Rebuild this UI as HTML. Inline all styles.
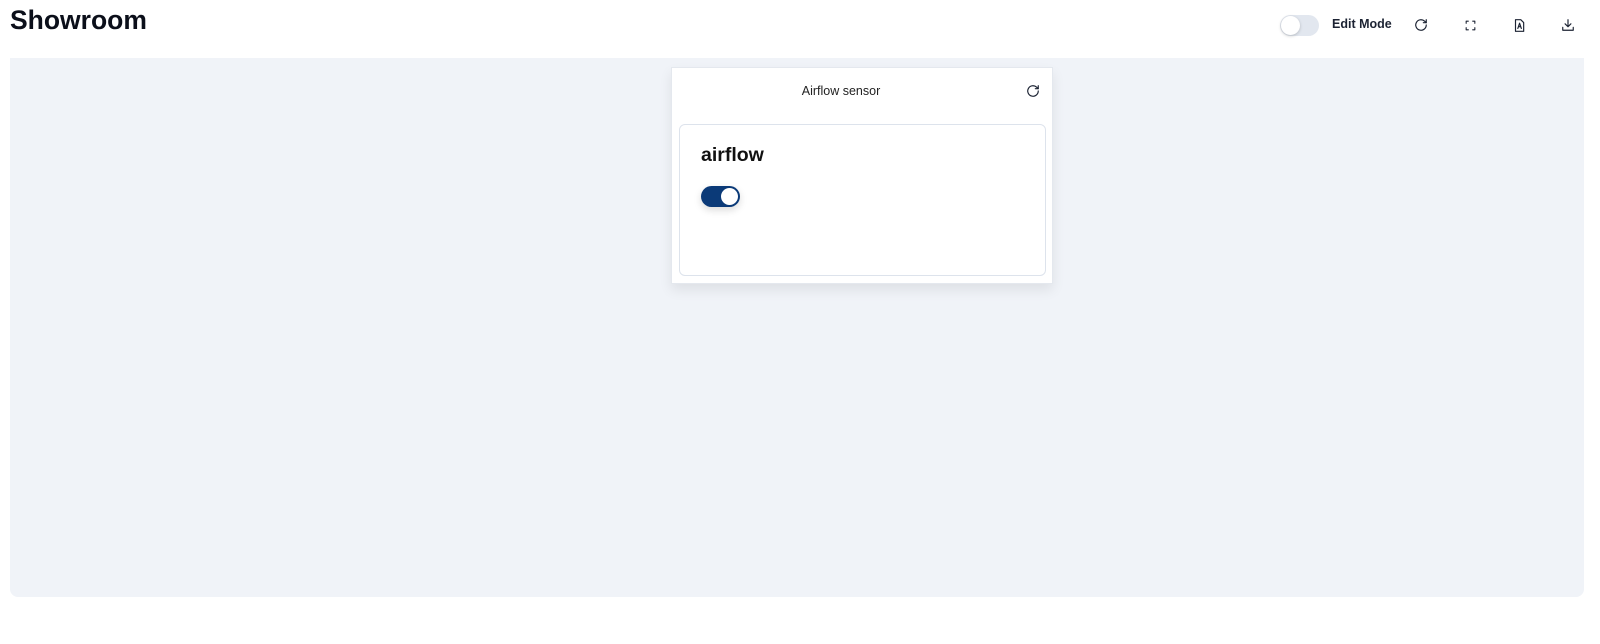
<!DOCTYPE html>
<html><head><style>
*{box-sizing:border-box;margin:0;padding:0}
body{width:1600px;height:644px;background:#fff;font-family:"Liberation Sans",sans-serif;position:relative;overflow:hidden;color:#111}
.t{position:absolute;left:10px;top:5px;font-size:26.5px;font-weight:bold;color:#0b0f1a}
.area{position:absolute;left:10px;top:58px;width:1574px;height:539px;background:#f0f3f8;border-radius:0 0 8px 8px}
.tg{position:absolute;left:1280px;top:15px;width:39px;height:21px;border-radius:11px;background:#e2e7ef}
.tg::after{content:"";position:absolute;left:1px;top:1px;width:19px;height:19px;border-radius:50%;background:#fff;box-shadow:0 1px 3px rgba(0,0,0,.2)}
.em{position:absolute;left:1332px;top:17px;font-size:12.5px;font-weight:bold;color:#1c2333}
svg.i{position:absolute;fill:none;stroke:#1c2333;stroke-width:2;stroke-linecap:round;stroke-linejoin:round}
.card{position:absolute;left:671px;top:67px;width:382px;height:217px;background:#fff;border:1px solid #e4e8ee;box-shadow:0 6px 12px rgba(0,0,0,.08)}
.ct{position:absolute;left:0;width:100%;padding-right:42px;top:16px;text-align:center;font-size:12.5px;color:#222}
.inner{position:absolute;left:7px;top:56px;width:367px;height:152px;border:1px solid #dde3ec;border-radius:6px}
.nm{position:absolute;left:21px;top:19px;font-size:19.5px;font-weight:bold;color:#111}
.sw{position:absolute;left:21px;top:61px;width:39px;height:21px;border-radius:11px;background:#0b3a78;box-shadow:0 3px 8px rgba(0,0,0,.15)}
.sw::after{content:"";position:absolute;right:2px;top:2px;width:17px;height:17px;border-radius:50%;background:#fff}
</style></head><body>
<div class="t">Showroom</div>
<div class="tg"></div><div class="em">Edit Mode</div>
<svg class="i" style="left:1414px;top:18px" width="14" height="14" viewBox="0 0 24 24"><path d="M21 12a9 9 0 1 1-3-6.7L21 8"/><path d="M21 3v5h-5"/></svg>
<svg class="i" style="left:1464px;top:19px" width="13" height="13" viewBox="0 0 24 24"><path d="M4 8V4h4M16 4h4v4M20 16v4h-4M8 20H4v-4"/></svg>
<svg class="i" style="left:1512px;top:18px" width="14" height="15" viewBox="0 0 24 24"><path d="M6 2h9l5 5v15H6z"/><path d="M10 17l3-9 3 9M11 14h4"/></svg>
<svg class="i" style="left:1561px;top:18px" width="14" height="14" viewBox="0 0 24 24"><path d="M3 16v5h18v-5M12 3v12M7 10l5 5 5-5"/></svg>
<div class="area"></div>
<div class="card">
<div class="ct">Airflow sensor</div>
<svg class="i" style="left:354px;top:16px" width="14" height="14" viewBox="0 0 24 24"><path d="M21 12a9 9 0 1 1-3-6.7L21 8"/><path d="M21 3v5h-5"/></svg>
<div class="inner"><div class="nm">airflow</div><div class="sw"></div></div>
</div>
</body></html>
